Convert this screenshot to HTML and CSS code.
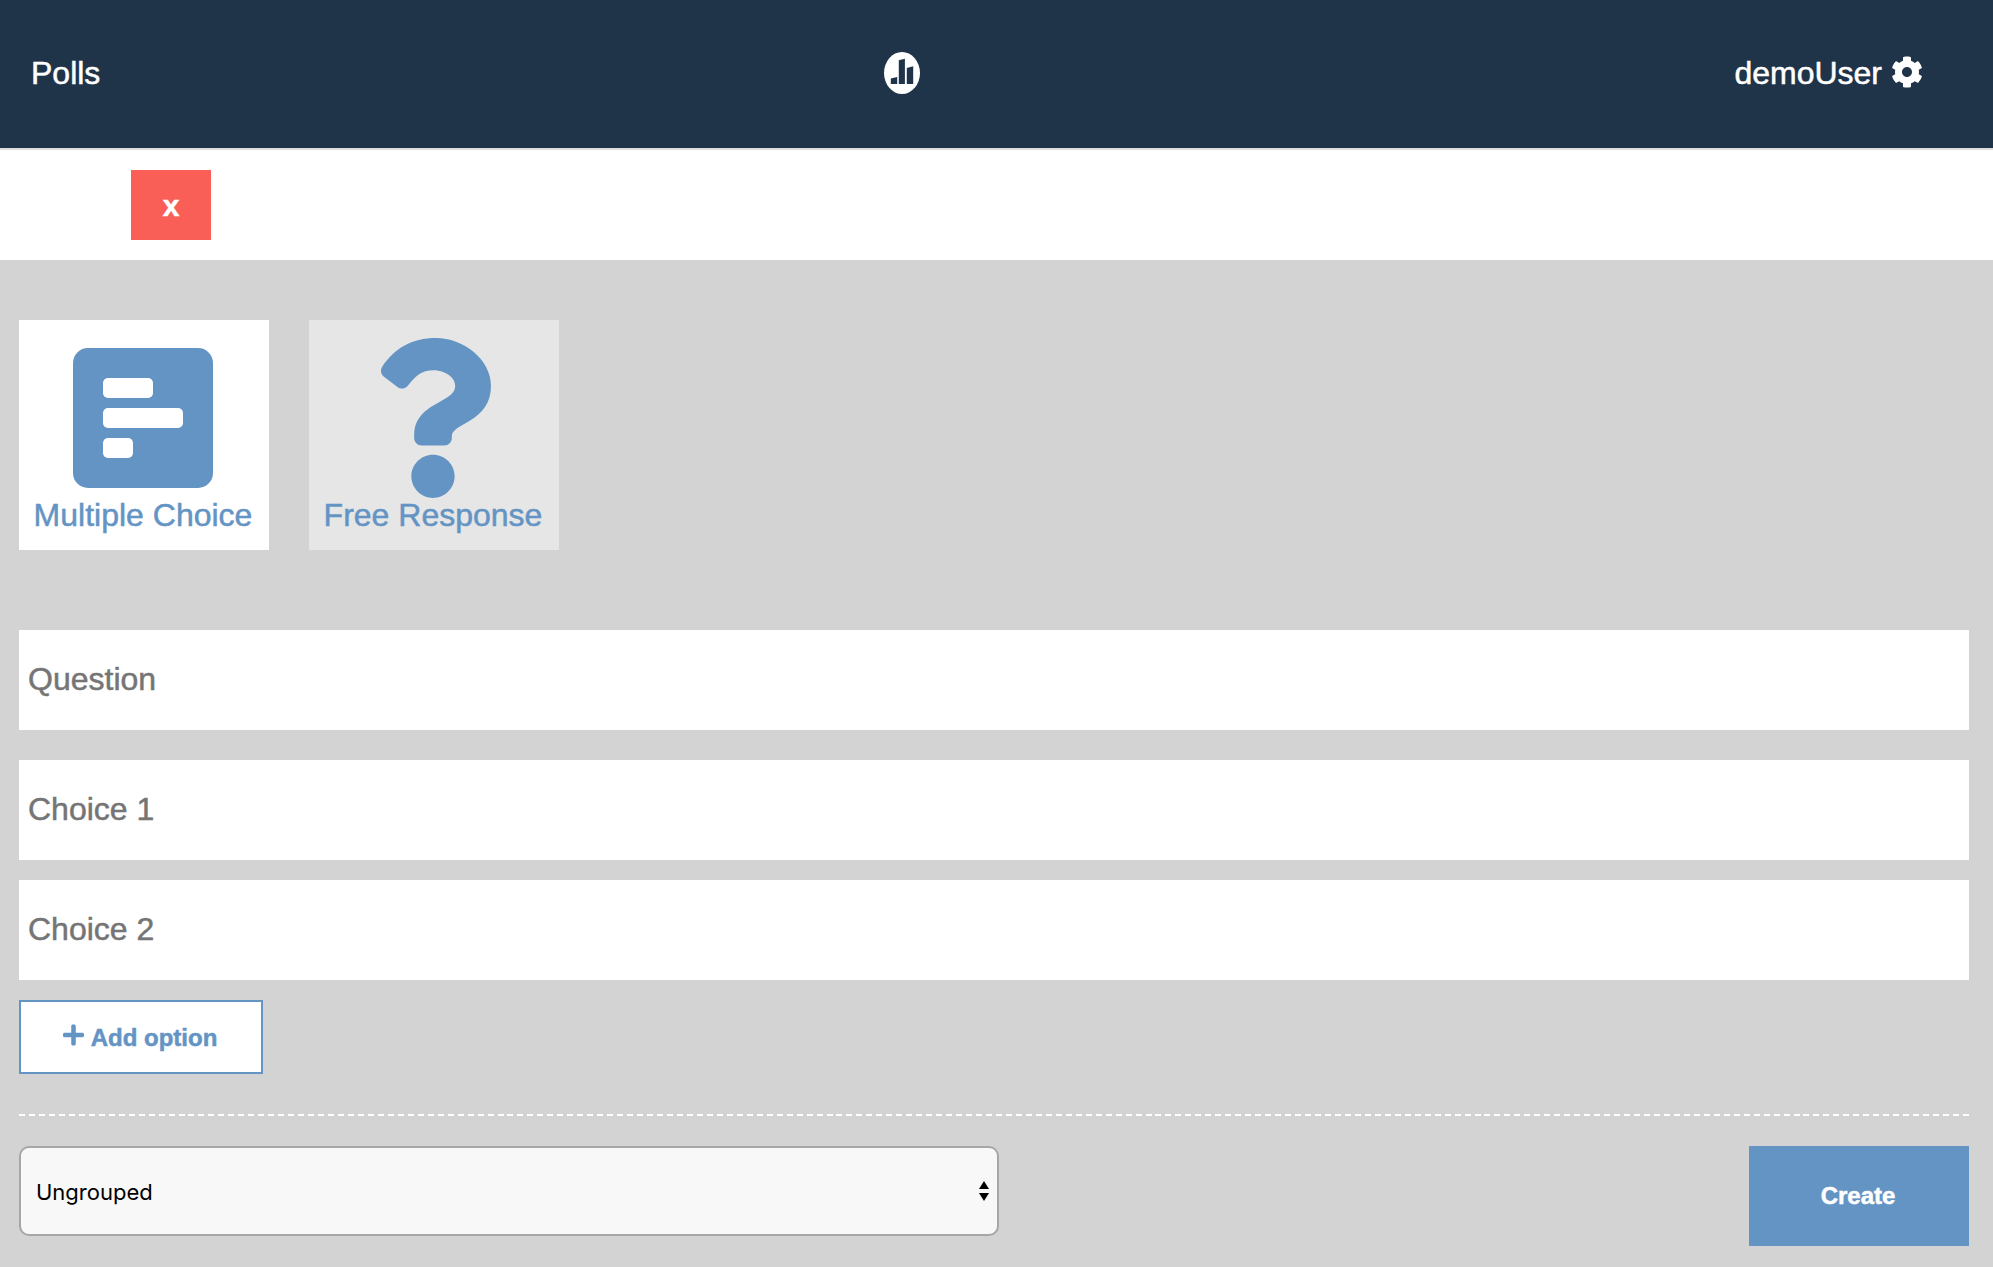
FILE: index.html
```html
<!DOCTYPE html>
<html lang="en">
<head>
<meta charset="utf-8">
<title>Create poll</title>
<link rel="stylesheet" href="styles.css">
</head>
<body>
<header class="topbar">
  <a class="brand">Polls</a>
  <svg class="logo" viewBox="0 0 36 42"><ellipse cx="18" cy="21" rx="18" ry="21" fill="#fff"/><path fill="#1f3349" d="M6.8 26.6l6.4-1.6v7H6.8zM14.8 8.3L20.9 6.8V32h-6.1zM22.8 16l6.4-1.8V32h-6.4z"/></svg>
  <div class="user"><span>demoUser</span>
    <svg class="cog" viewBox="0 0 512 512"><path fill="#fff" d="M487.4 315.7l-42.6-24.6c4.3-23.2 4.3-47 0-70.2l42.6-24.6c4.9-2.8 7.1-8.6 5.5-14-11.1-35.6-30-67.8-54.7-94.6-3.8-4.1-10-5.1-14.8-2.3L380.8 110c-17.9-15.4-38.5-27.3-60.8-35.1V25.8c0-5.6-3.9-10.5-9.4-11.7-36.7-8.2-74.3-7.8-109.2 0-5.5 1.2-9.4 6.1-9.4 11.7V75c-22.2 7.9-42.8 19.8-60.8 35.1L88.7 85.5c-4.9-2.8-11-1.9-14.8 2.3-24.7 26.7-43.6 58.9-54.7 94.6-1.7 5.4.6 11.2 5.5 14L67.3 221c-4.3 23.2-4.3 47 0 70.2l-42.6 24.6c-4.9 2.8-7.1 8.6-5.5 14 11.1 35.6 30 67.8 54.7 94.6 3.8 4.1 10 5.1 14.8 2.3l42.6-24.6c17.9 15.4 38.5 27.3 60.8 35.1v49.2c0 5.6 3.9 10.5 9.4 11.7 36.7 8.2 74.3 7.8 109.2 0 5.5-1.2 9.4-6.1 9.4-11.7v-49.2c22.2-7.9 42.8-19.8 60.8-35.1l42.6 24.6c4.9 2.8 11 1.9 14.8-2.3 24.7-26.7 43.6-58.9 54.7-94.6 1.5-5.5-.7-11.3-5.6-14.1zM256 336c-44.1 0-80-35.9-80-80s35.9-80 80-80 80 35.9 80 80-35.9 80-80 80z"/></svg>
  </div>
</header>
<div class="closebar"><button class="close">x</button></div>
<main class="form">
  <div class="types">
    <div class="type active">
      <svg class="type-icon" viewBox="0 0 140 160"><rect y="10" width="140" height="140" rx="15" fill="#6494c4"/><g fill="#fff"><rect x="30" y="40" width="50" height="20" rx="5"/><rect x="30" y="70" width="80" height="20" rx="5"/><rect x="30" y="100" width="30" height="20" rx="5"/></g></svg>
      <span>Multiple Choice</span>
    </div>
    <div class="type">
      <svg class="type-icon" viewBox="0 0 384 512"><path fill="#6494c4" d="M202.021 0C122.202 0 70.503 32.703 29.914 91.026c-7.363 10.58-5.093 25.086 5.178 32.874l43.138 32.709c10.373 7.865 25.132 6.026 33.253-4.148 25.049-31.381 43.63-49.449 82.757-49.449 30.764 0 68.816 19.799 68.816 49.631 0 22.552-18.617 34.134-48.993 51.164-35.423 19.86-82.299 44.576-82.299 106.405V320c0 13.255 10.745 24 24 24h72.471c13.255 0 24-10.745 24-24v-5.773c0-42.86 125.268-44.645 125.268-160.627C377.504 66.256 286.902 0 202.021 0zM192 373.459c-38.196 0-69.271 31.075-69.271 69.271 0 38.195 31.075 69.27 69.271 69.27s69.271-31.075 69.271-69.271-31.075-69.27-69.271-69.27z"/></svg>
      <span>Free Response</span>
    </div>
  </div>
  <input class="field question" placeholder="Question">
  <input class="field" placeholder="Choice 1">
  <input class="field" placeholder="Choice 2">
  <button class="add"><svg class="plus" viewBox="0 0 448 512"><path fill="#6494c4" d="M416 208H272V64c0-17.67-14.33-32-32-32h-32c-17.67 0-32 14.33-32 32v144H32c-17.67 0-32 14.33-32 32v32c0 17.67 14.33 32 32 32h144v144c0 17.67 14.33 32 32 32h32c17.67 0 32-14.33 32-32V304h144c17.67 0 32-14.33 32-32v-32c0-17.67-14.33-32-32-32z"/></svg><span>Add option</span></button>
  <div class="divider"></div>
  <div class="actions">
    <div class="select"><span>Ungrouped</span><svg class="arrows" viewBox="0 0 10 20"><path d="M5 0l5 8H0zM5 20l5-8H0z"/></svg></div>
    <button class="create">Create</button>
  </div>
</main>
</body>
</html>
```
FILE: styles.css
```css
* { box-sizing: border-box; }
body {
  margin: 0;
  height: 1267px;
  overflow: hidden;
  background: #d3d3d3;
  font-family: "Liberation Sans", Arial, sans-serif;
  font-size: 32px;
  -webkit-text-stroke: 0.5px currentColor;
}
svg { display: block; flex: none; }
button {
  border: 0;
  border-radius: 0;
  padding: 0;
  font-family: inherit;
  font-weight: bold;
  font-size: 24px;
  color: #fff;
}
.topbar {
  display: grid;
  grid-template-columns: 853px 36px 1fr;
  height: 150px;
  padding: 52px 70px 0 31px;
  background: #1f3349;
  border-bottom: 2px solid #dddddd;
  color: #fff;
  line-height: 42px;
}
.logo { width: 36px; height: 42px; }
.user {
  display: flex;
  justify-content: flex-end;
  gap: 9px;
}
.cog { width: 32px; height: 32px; margin-top: 4px; }
.closebar {
  height: 110px;
  padding: 20px 131px;
  background: #fff;
}
.close {
  display: block;
  width: 80px;
  height: 70px;
  padding-top: 2px;
  background: #f95e57;
  font-size: 30px;
}
.form { padding: 60px 24px 0 19px; }
.types {
  display: flex;
  gap: 40px;
  margin-bottom: 80px;
}
.type {
  display: flex;
  flex-direction: column;
  align-items: center;
  width: 250px;
  height: 230px;
  padding: 18px 2px 0 0;
  background: #e6e6e6;
  color: #6494c4;
  line-height: 34px;
}
.active { background: #fff; }
.type-icon { height: 160px; }
.field {
  display: block;
  width: 100%;
  height: 100px;
  margin: 0 0 20px;
  padding: 0 9px 2px;
  border: 0;
  background: #fff;
  font: inherit;
  -webkit-text-stroke: inherit;
}
.field::placeholder { color: #757575; }
.question { margin-bottom: 30px; }
.add {
  display: flex;
  justify-content: center;
  gap: 7px;
  width: 244px;
  height: 74px;
  padding: 21px 2px 0 0;
  border: 2px solid #6494c4;
  background: #fff;
  color: #6494c4;
  line-height: 29px;
  -webkit-text-stroke: 0.5px currentColor;
}
.plus { width: 21px; height: 24px; }
.divider {
  height: 2px;
  margin: 40px 0 30px;
  background: repeating-linear-gradient(90deg, #fff 0 6px, transparent 6px calc((100% - 6px) / 195));
}
.actions {
  display: flex;
  justify-content: space-between;
}
.select {
  display: flex;
  align-items: center;
  justify-content: space-between;
  width: 980px;
  height: 90px;
  padding: 0 8px 0 15px;
  border: 2px solid #a6a6a6;
  border-radius: 10px;
  background: #f8f8f8;
  color: #000;
  font: 22px Inter, sans-serif;
  -webkit-text-stroke: 0;
}
.select span { padding-top: 2px; }
.arrows { width: 10px; height: 20px; }
.create {
  width: 220px;
  height: 100px;
  padding-right: 2px;
  background: #6494c4;
  -webkit-text-stroke: 0.5px currentColor;
}
```
